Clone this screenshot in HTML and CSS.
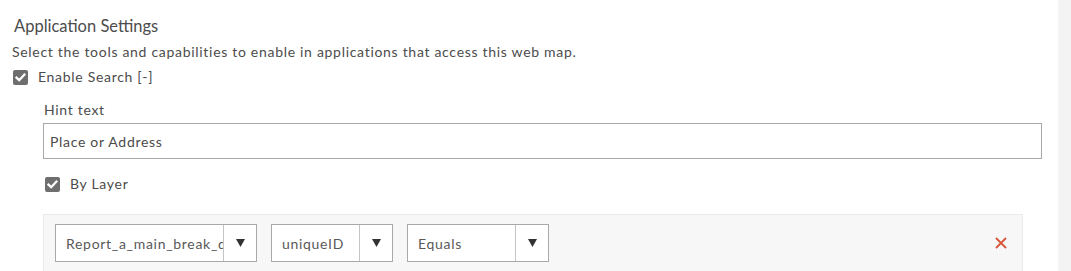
FILE: index.html
```html
<!DOCTYPE html>
<html>
<head>
<meta charset="utf-8">
<link rel="stylesheet" href="styles.css">
</head>
<body>
<div class="page">
  <main class="content">
    <h2 class="title">Application Settings</h2>
    <p class="desc">Select the tools and capabilities to enable in applications that access this web map.</p>
    <label class="check">
      <span class="box"><svg viewBox="0 0 15 15" width="15" height="15"><path d="M3.5 7.6 L6.2 10.2 L11.4 4.6" fill="none" stroke="#fff" stroke-width="2.3" stroke-linecap="square"/></svg></span>
      <span>Enable Search [-]</span>
    </label>
    <div class="indent">
      <div class="field-label">Hint text</div>
      <div class="input">Place or Address</div>
      <label class="check check-sub">
        <span class="box"><svg viewBox="0 0 15 15" width="15" height="15"><path d="M3.5 7.6 L6.2 10.2 L11.4 4.6" fill="none" stroke="#fff" stroke-width="2.3" stroke-linecap="square"/></svg></span>
        <span>By Layer</span>
      </label>
      <div class="panel">
        <div class="select sel-layer"><span class="sel-text">Report_a_main_break_data</span><span class="sel-arrow"><svg viewBox="0 0 9 8" width="9" height="8"><polygon points="0,0 9,0 4.5,8" fill="#333"/></svg></span></div>
        <div class="select sel-field"><span class="sel-text">uniqueID</span><span class="sel-arrow"><svg viewBox="0 0 9 8" width="9" height="8"><polygon points="0,0 9,0 4.5,8" fill="#333"/></svg></span></div>
        <div class="select sel-op"><span class="sel-text">Equals</span><span class="sel-arrow"><svg viewBox="0 0 9 8" width="9" height="8"><polygon points="0,0 9,0 4.5,8" fill="#333"/></svg></span></div>
        <span class="remove"><svg viewBox="0 0 12 12" width="12" height="12"><path d="M1 1 L11 11 M11 1 L1 11" stroke="#d6543a" stroke-width="1.8" fill="none"/></svg></span>
      </div>
    </div>
  </main>
  <div class="scrollbar"></div>
</div>
</body>
</html>
```
FILE: styles.css
```css
html, body {
  margin: 0;
  padding: 0;
  background: #fff;
  height: 100%;
  overflow: hidden;
}
body {
  font-family: Lato, "Noto Sans", sans-serif;
  color: #4c4c4c;
}
.page {
  display: flex;
  height: 271px;
}
.content {
  flex: 1;
  padding: 0 16px 0 12px;
  min-width: 0;
}
.scrollbar {
  width: 12px;
  background: #f3f3f3;
  border-left: 1px solid #f6f6f6;
}
.title {
  margin: 14px 0 0 2px;
  font-size: 16.5px;
  font-weight: 400;
  line-height: 24px;
}
.desc {
  margin: 4px 0 0 0;
  font-size: 14px;
  line-height: 20px;
  letter-spacing: 0.7px;
}
.check {
  display: flex;
  align-items: center;
  gap: 10px;
  margin-top: 5px;
  font-size: 14px;
  line-height: 20px;
  letter-spacing: 0.7px;
  margin-left: 1px;
}
.box {
  width: 15px;
  height: 15px;
  background: #6e6e6e;
  border-radius: 2px;
  display: flex;
}
.indent {
  padding-left: 31px;
}
.field-label {
  margin-top: 13px;
  font-size: 14px;
  line-height: 20px;
  letter-spacing: 0.7px;
  margin-left: 1px;
}
.input {
  margin-top: 3px;
  height: 34px;
  border: 1px solid #a9a9a9;
  padding: 0 6px;
  display: flex;
  align-items: center;
  font-size: 14px;
  letter-spacing: 0.7px;
}
.check-sub {
  margin-top: 15px;
  margin-left: 2px;
}
.panel {
  margin-top: 20px;
  margin-right: 19px;
  background: #f7f7f7;
  border: 1px solid #ebebeb;
  border-bottom: none;
  padding: 9px 11px 20px;
  display: flex;
  gap: 14px;
  align-items: center;
}
.select {
  height: 36px;
  border: 1px solid #a9a9a9;
  background: #fff;
  display: flex;
  font-size: 14px;
  letter-spacing: 0.7px;
  color: #595959;
}
.sel-text {
  flex: 1;
  padding-left: 10px;
  display: flex;
  align-items: center;
  overflow: hidden;
  white-space: nowrap;
  min-width: 0;
}
.sel-arrow {
  width: 32px;
  border-left: 1px solid #c4c4c4;
  display: flex;
  align-items: center;
  justify-content: center;
}
.sel-layer { width: 200px; }
.sel-field { width: 120px; }
.sel-op { width: 140px; }
.remove {
  margin-left: auto;
  margin-right: 4px;
  display: flex;
}
```
